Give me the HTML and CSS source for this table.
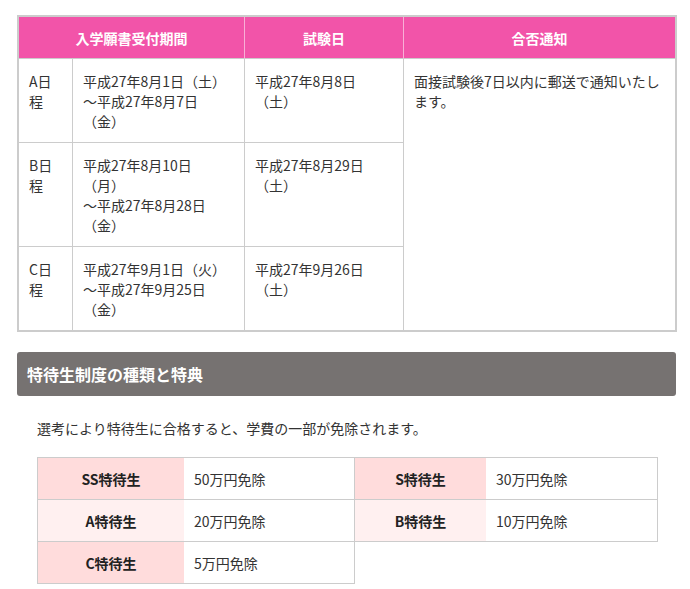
FILE: index.html
```html
<!DOCTYPE html>
<html lang="ja">
<head>
<meta charset="utf-8">
<title>入試日程</title>
<link rel="stylesheet" href="styles.css">
</head>
<body>
<div class="page">
  <div class="schedule">
    <div class="head span2">入学願書受付期間</div>
    <div class="head">試験日</div>
    <div class="head last-col">合否通知</div>

    <div class="cell c1">A日程</div>
    <div class="cell c2">平成27年8月1日（土）<br>～平成27年8月7日（金）</div>
    <div class="cell c3">平成27年8月8日（土）</div>
    <div class="cell c4">面接試験後7日以内に郵送で通知いたします。</div>

    <div class="cell c1">B日程</div>
    <div class="cell c2">平成27年8月10日（月）<br>～平成27年8月28日（金）</div>
    <div class="cell c3">平成27年8月29日（土）</div>

    <div class="cell c1 last-row">C日程</div>
    <div class="cell c2 last-row">平成27年9月1日（火）<br>～平成27年9月25日（金）</div>
    <div class="cell c3 last-row">平成27年9月26日（土）</div>
  </div>

  <h2 class="bar">特待生制度の種類と特典</h2>

  <p class="lead">選考により特待生に合格すると、学費の一部が免除されます。</p>

  <div class="ranks">
    <div class="label strong">SS特待生</div>
    <div class="value">50万円免除</div>
    <div class="label strong">S特待生</div>
    <div class="value">30万円免除</div>

    <div class="label soft">A特待生</div>
    <div class="value">20万円免除</div>
    <div class="label soft">B特待生</div>
    <div class="value">10万円免除</div>

    <div class="label strong">C特待生</div>
    <div class="value">5万円免除</div>
  </div>
</div>
</body>
</html>
```

FILE: styles.css
```css
* {
  box-sizing: border-box;
}

body {
  margin: 0;
  background: #fff;
  color: #333;
  font-family: "Noto Sans CJK JP", "Noto Sans", sans-serif;
  font-size: 14px;
  line-height: 20px;
  text-spacing-trim: space-all;
}

.page {
  padding: 15px 0 0 17px;
  width: 677px;
}

/* schedule table */
.schedule {
  display: grid;
  grid-template-columns: 54px 172px 159px 271px;
  width: 660px;
  border: 2px solid #cccccc;
}

.head {
  background: #f254a9;
  color: #fff;
  font-weight: bold;
  text-align: center;
  padding: 11px 10px 10px;
  border-right: 1px solid #f8b0d6;
  border-bottom: 1px solid #cccccc;
}

.head.span2 {
  grid-column: span 2;
}

.head.last-col {
  border-right: none;
}

.cell {
  padding: 12px 10px 11px;
  border-right: 1px solid #cccccc;
  border-bottom: 1px solid #cccccc;
}

.cell.c2 {
  padding-right: 16px;
}

.cell.c3 {
  padding-right: 20px;
}

.cell.c4 {
  grid-column: 4;
  grid-row: 2 / span 3;
  border-right: none;
  border-bottom: none;
}

.cell.last-row {
  border-bottom: none;
}

/* heading bar */
.bar {
  margin: 20px 0 0;
  width: 659px;
  height: 44px;
  padding: 0 10px;
  background: #767271;
  color: #fff;
  font-size: 16px;
  font-weight: bold;
  line-height: 44px;
  border-radius: 3px;
}

.lead {
  margin: 22px 0 19px 20px;
}

/* scholarship ranks */
.ranks {
  display: grid;
  grid-template-columns: 146px 171px 131px 172px;
  margin-left: 20px;
  width: 621px;
  border-top: 1px solid #cccccc;
  border-left: 1px solid #cccccc;
}

.label {
  padding: 11px 10px 10px;
  text-align: center;
  font-weight: bold;
  color: #222;
  border-bottom: 1px solid #cccccc;
}

.label.strong {
  background: #ffdcdc;
}

.label.soft {
  background: #fff0f0;
}

.value {
  padding: 11px 10px 10px;
  border-right: 1px solid #cccccc;
  border-bottom: 1px solid #cccccc;
}
```
